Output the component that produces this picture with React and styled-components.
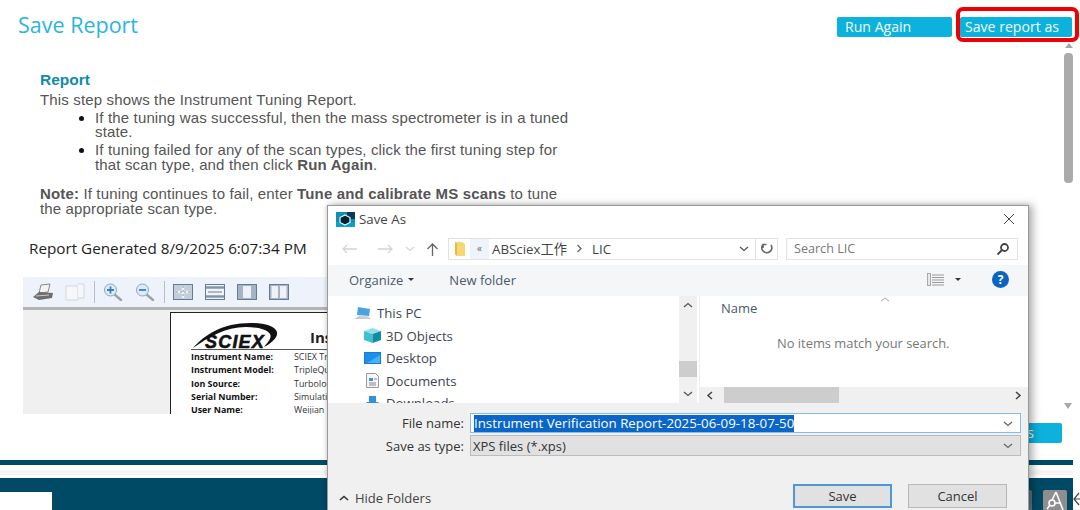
import React from 'react';
import styled, { createGlobalStyle } from 'styled-components';

const Global = createGlobalStyle`
  html, body { margin: 0; padding: 0; background: #fff; }
  * { box-sizing: border-box; }
`;

const Page = styled.div`
  position: relative;
  width: 1080px;
  height: 510px;
  overflow: hidden;
  background: #fff;
  font-family: 'Open Sans', sans-serif;
`;

const Header = styled.div`
  display: flex;
  align-items: flex-start;
  justify-content: space-between;
  height: 48px;
  padding: 7px 1px 0 18px;
`;

const Title = styled.h1`
  margin: 3px 0 0;
  font-size: 21.5px;
  font-weight: 400;
  color: #29b5e0;
`;

const HeaderButtons = styled.div`
  display: flex;
  align-items: center;
  gap: 4px;
`;

const Highlight = styled.div`
  padding: 6px 3px 1px 0;
  border: 4px solid #ee0000;
  border-radius: 7px;
`;

const ActionButton = styled.div`
  width: ${p => p.$w}px;
  height: 20px;
  margin-top: ${p => p.$mt || 0}px;
  padding-left: ${p => p.$pad}px;
  border-radius: 2px;
  background: #0db2dc;
  color: #f2fbff;
  font-size: 14.1px;
  line-height: 20px;
`;

const Content = styled.div`
  display: flex;
  flex-direction: column;
  height: 412px;
  padding-left: 40px;
`;

const Heading = styled.h2`
  margin: 23px 0 0;
  font: bold 15.5px/18px 'Liberation Sans', sans-serif;
  color: #0f8aab;
`;

const Body = styled.div`
  width: 535px;
  margin-top: 4px;
  font: 15px/14.5px 'Liberation Sans', sans-serif;
  letter-spacing: 0.15px;
  color: #555;
`;

const Bullets = styled.ul`
  margin: 3.25px 0 0;
  padding-left: 55px;
  li { margin-bottom: 3.5px; }
  li::marker { color: #111; }
`;

const Note = styled.p`
  margin: 15px 0 0;
`;

const Generated = styled.div`
  margin: 22px 0 0 -11px;
  font-size: 15.25px;
  line-height: 20px;
  color: #222;
`;

const Viewer = styled.div`
  display: flex;
  flex-direction: column;
  width: 310px;
  height: 137px;
  margin: 19px 0 0 -17px;
  background: #f0f0f0;
`;

const ViewerBar = styled.div`
  display: flex;
  align-items: center;
  height: 33px;
  padding-left: 10px;
  background: #eef3fb;
  border-bottom: 3px solid #b4b4b4;
`;

const ToolIcon = styled.svg`
  flex: none;
  width: 20px;
  height: 18px;
  margin-right: ${p => p.$gap || 0}px;
`;

const ToolSep = styled.div`
  width: 1px;
  height: 22px;
  margin-right: 8px;
  margin-left: -3px;
  background: #b8bec6;
`;

const ViewerArea = styled.div`
  flex: 1;
  padding: 2px 0 0 147px;
  overflow: hidden;
`;

const Sheet = styled.div`
  height: 120px;
  padding: 9px 0 0 20px;
  background: #fff;
  border-top: 1px solid #222;
  border-left: 1px solid #222;
  overflow: hidden;
  white-space: nowrap;
`;

const LogoRow = styled.div`
  display: flex;
  align-items: center;
  width: 200px;
  height: 28px;
  border-bottom: 1px solid #555;
`;

const LogoBox = styled.div`
  position: relative;
  flex: none;
  width: 119px;
  height: 27px;
`;

const LogoSwoosh = styled.svg`
  position: absolute;
  left: 0;
  top: 0;
`;

const LogoText = styled.span`
  position: absolute;
  left: 14px;
  top: 12px;
  font: italic 700 18px/16px 'Liberation Sans', sans-serif;
  letter-spacing: 1.2px;
  color: #111;
  -webkit-text-stroke: 0.6px #111;
`;

const SheetTitle = styled.span`
  margin-top: 3px;
  font: bold 15px/20px 'Open Sans', sans-serif;
  color: #222;
`;

const InfoGrid = styled.div`
  display: grid;
  grid-template-columns: 103px 1fr;
  font-size: 8.9px;
  line-height: 13.2px;
  color: #333;
  b { color: #111; font-weight: 700; }
`;

const Footer = styled.div`
  display: flex;
  flex-direction: column;
`;

const BackButton = styled.div`
  position: absolute;
  left: 960px;
  top: 423px;
  width: 102px;
  height: 20px;
  padding-right: 28px;
  border-radius: 2px;
  background: #0db2dc;
  color: #f2fbff;
  font-size: 14px;
  line-height: 20px;
  text-align: right;
`;

const FooterScroll = styled.div`
  position: absolute;
  left: 1064px;
  top: 403px;
  width: 0;
  height: 0;
  border-left: 4px solid transparent;
  border-right: 4px solid transparent;
  border-top: 6px solid #a8a8a8;
`;

const TopLine = styled.div`
  width: 1073px;
  height: 5px;
  background: #004a66;
`;

const PaleLine = styled.div`
  width: 1073px;
  height: 5px;
  margin-top: 5px;
  background: #f5f5f5;
`;

const FooterBar = styled.div`
  display: flex;
  align-items: flex-end;
  justify-content: space-between;
  height: 32px;
  margin-top: 3px;
`;

const FooterDark = styled.div`
  display: flex;
  align-items: flex-end;
  justify-content: space-between;
  width: 1073px;
  height: 32px;
  padding-right: 6px;
  background: #004a66;
`;

const FooterWhite = styled.div`
  width: 52px;
  height: 18px;
  background: #fff;
`;

const FooterTools = styled.div`
  display: flex;
  align-items: flex-end;
  gap: 11px;
`;

const FooterTool = styled.div`
  display: flex;
  align-items: center;
  justify-content: center;
  width: 24px;
  height: 20px;
  border-radius: 2px 2px 0 0;
  background: ${p => (p.$dim ? '#5f7480' : '#8e8e8e')};
`;

const Scroll = styled.div`
  position: absolute;
  left: 1064px;
  top: 43px;
  display: flex;
  flex-direction: column;
  align-items: center;
  width: 9px;
`;

const ScrollUp = styled.div`
  width: 0;
  height: 0;
  border-left: 4px solid transparent;
  border-right: 4px solid transparent;
  border-bottom: 5px solid #a8a8a8;
`;

const ScrollThumb = styled.div`
  width: 9px;
  height: 130px;
  margin-top: 5px;
  border-radius: 4px;
  background: #ababab;
`;

const Dialog = styled.div`
  position: absolute;
  left: 327px;
  top: 205px;
  display: flex;
  flex-direction: column;
  width: 702px;
  height: 305px;
  background: #fff;
  border: 1px solid #9a9a9a;
  border-bottom: none;
  box-shadow: 4px 0 8px rgba(0, 0, 0, 0.3), -1px 0 4px rgba(0, 0, 0, 0.12);
  font-family: 'Open Sans', sans-serif;
  color: #333;
`;

const DialogTitle = styled.div`
  display: flex;
  align-items: center;
  gap: 4px;
  height: 26px;
  padding: 0 13px 0 8px;
  font-size: 13.3px;
  color: #444;
`;

const DialogName = styled.span`
  flex: 1;
`;

const AddressRow = styled.div`
  display: flex;
  align-items: center;
  height: 33px;
  padding: 1px 9px 1px 0;
`;

const NavIcons = styled.div`
  display: flex;
  align-items: center;
  width: 120px;
  flex: none;
  padding-left: 13px;
`;

const AddressBox = styled.div`
  display: flex;
  align-items: center;
  width: 330px;
  height: 22px;
  border: 1px solid #e2e2e2;
  font-size: 13.3px;
  color: #444;
`;

const FolderCell = styled.div`
  display: flex;
  align-items: center;
  justify-content: center;
  width: 21px;
`;

const CrumbBack = styled.div`
  width: 19px;
  height: 20px;
  background: #eef4fb;
  color: #666;
  font-size: 10px;
  line-height: 18px;
  text-align: center;
`;

const Crumb = styled.span`
  margin-left: 3px;
  font-family: 'Open Sans', 'Noto Sans CJK SC', sans-serif;
`;

const CrumbArrow = styled.span`
  margin: 0 9px 0 9px;
  display: flex;
`;

const Spacer = styled.div`
  flex: 1;
`;

const ChevronCell = styled.span`
  display: flex;
  margin: ${p => p.$margin};
`;

const RefreshCell = styled.div`
  display: flex;
  align-items: center;
  justify-content: center;
  width: 22px;
  height: 20px;
  border-left: 1px solid #e2e2e2;
`;

const SearchBox = styled.div`
  display: flex;
  align-items: center;
  justify-content: space-between;
  width: 232px;
  height: 22px;
  margin-left: 8px;
  padding: 0 7px 0 7px;
  border: 1px solid #e2e2e2;
  font-size: 12.6px;
  color: #777;
`;

const CommandBar = styled.div`
  display: flex;
  align-items: center;
  height: 31px;
  padding: 0 19px 2px 21px;
  background: #f4f6f8;
  font-size: 13px;
  color: #4a5a70;
`;

const Caret = styled.span`
  width: 0;
  height: 0;
  margin-left: ${p => p.$gap || 5}px;
  border-left: 3px solid transparent;
  border-right: 3px solid transparent;
  border-top: 3px solid #334;
`;

const NewFolder = styled.span`
  margin-left: 35px;
`;

const HelpDot = styled.span`
  display: flex;
  align-items: center;
  justify-content: center;
  width: 17px;
  height: 17px;
  margin-left: 31px;
  border-radius: 50%;
  background: #0a64c0;
  color: #fff;
  font-size: 12px;
  font-weight: 700;
`;

const Panes = styled.div`
  display: flex;
  height: 107px;
`;

const NavPane = styled.div`
  display: flex;
  width: 371px;
  flex: none;
`;

const NavList = styled.div`
  flex: 1;
  padding: 6px 0 0 26px;
  overflow: hidden;
`;

const NavItem = styled.div`
  display: flex;
  align-items: center;
  gap: 5px;
  height: 22.5px;
  margin-left: ${p => (p.$top ? 0 : 10)}px;
  font-size: 13.2px;
  color: #3c4650;
`;

const NavScroll = styled.div`
  display: flex;
  flex-direction: column;
  justify-content: space-between;
  align-items: center;
  width: 18px;
  margin-right: 2px;
  padding: 5px 0;
  background: #f0f0f0;
`;

const NavThumb = styled.div`
  width: 18px;
  height: 16px;
  margin-top: 38px;
  background: #cdcdcd;
`;

const FilePane = styled.div`
  display: flex;
  flex-direction: column;
  flex: 1;
  position: relative;
  border-left: 1px solid #eee;
`;

const SortMark = styled.svg`
  position: absolute;
  left: 179px;
  top: 0;
`;

const NameHead = styled.div`
  padding: 3px 0 0 21px;
  font-size: 13px;
  color: #4a5a70;
`;

const EmptyNote = styled.div`
  margin: 17px 0 0 77px;
  font-size: 12.9px;
  color: #777;
`;

const HScroll = styled.div`
  display: flex;
  align-items: center;
  height: 16px;
  margin-top: auto;
  padding: 0 6px;
  background: #f0f0f0;
`;

const HThumb = styled.div`
  width: 115px;
  height: 16px;
  margin-left: 10px;
  background: #cdcdcd;
`;

const Lower = styled.div`
  flex: 1;
  background: #f0f0f0;
  padding-top: 10px;
`;

const FormRow = styled.div`
  display: flex;
  align-items: center;
  margin-bottom: ${p => p.$gap || 0}px;
  padding-right: 7px;
`;

const FormLabel = styled.label`
  width: 142px;
  padding-right: 6px;
  font-size: 13px;
  text-align: right;
  color: #333;
`;

const FileInput = styled.div`
  display: flex;
  align-items: center;
  justify-content: space-between;
  flex: 1;
  height: 20px;
  padding: 0 7px 0 3px;
  border: 1px solid #86bde8;
  background: #fff;
  font-size: 13.3px;
`;

const Selected = styled.span`
  padding: 0 0 1px;
  background: #0a66c8;
  color: #fff;
  line-height: 16px;
`;

const TypeSelect = styled.div`
  display: flex;
  align-items: center;
  justify-content: space-between;
  flex: 1;
  height: 21px;
  padding: 0 7px 0 2px;
  border: 1px solid #bcbcbc;
  background: #e1e1e1;
  font-size: 13px;
  color: #333;
`;

const BottomRow = styled.div`
  display: flex;
  align-items: center;
  margin-top: 28px;
  padding: 0 21px 0 11px;
`;

const HideFolders = styled.div`
  display: flex;
  align-items: center;
  gap: 6px;
  flex: 1;
  padding-top: 4px;
  font-size: 13px;
  color: #444;
`;

const DialogButton = styled.div`
  width: 99px;
  height: 24px;
  margin-left: 16px;
  border: ${p => (p.$primary ? '2px solid #4a9ad8' : '1px solid #b8b8b8')};
  background: #e1e1e1;
  font-size: 13px;
  line-height: ${p => (p.$primary ? 20 : 22)}px;
  text-align: center;
  color: #333;
`;

const Chevron = ({ d = 'M1 3l4 3.5L9 3', color = '#666' }) => (
  <svg width="10" height="9" viewBox="0 0 10 9" fill="none" stroke={color} strokeWidth="1.3">
    <path d={d} />
  </svg>
);

const Zoom = ({ minus }) => (
  <ToolIcon viewBox="0 0 20 18" $gap={12}>
    <path d="M11 11l7 6" stroke="#9aa3ad" strokeWidth="2.4" strokeLinecap="round" />
    <circle cx="7.500" cy="7" r="6" fill="#dcebf8" stroke="#8fa6bb" />
    <path d={minus ? 'M4 7h7' : 'M4 7h7M7.500 3.500v7'} stroke="#3a7fc4" strokeWidth="1.8" />
  </ToolIcon>
);

const Report = () => (
  <Viewer>
    <ViewerBar>
      <ToolIcon viewBox="0 0 20 18" $gap={12}>
        <path d="M8 2l9-1-2 8-9 1z" fill="#f4f4f4" stroke="#888" />
        <path d="M0 14l6-5 14 1-1 5-13 2z" fill="#6d6d6d" />
        <path d="M3 13l13-1" stroke="#ccc" />
      </ToolIcon>
      <ToolIcon viewBox="0 0 20 18" $gap={12}>
        <path d="M1 3h12v14H1z" fill="#f5f7fa" stroke="#d2d6da" />
        <path d="M13 1h6v14h-6" fill="#f5f7fa" stroke="#d2d6da" />
      </ToolIcon>
      <ToolSep />
      <Zoom />
      <Zoom minus />
      <ToolSep />
      <ToolIcon viewBox="0 0 20 18" $gap={12}>
        <rect x="0.500" y="1.500" width="19" height="15" fill="#c4cedb" stroke="#667b96" />
        <path d="M10 3v12M3 9h14" stroke="#f0f4f9" strokeWidth="2.4" />
        <path d="M10 3v12M3 9h14" stroke="#667b96" strokeWidth="0.8" strokeDasharray="2 2" />
      </ToolIcon>
      <ToolIcon viewBox="0 0 20 18" $gap={12}>
        <rect x="0.500" y="1.500" width="19" height="15" fill="#f0f3f7" stroke="#667b96" />
        <path d="M1 4.500h18M1 13.500h18" stroke="#8496ab" strokeWidth="2.4" />
        <path d="M3 9h14" stroke="#667b96" />
      </ToolIcon>
      <ToolIcon viewBox="0 0 20 18" $gap={12}>
        <rect x="0.500" y="1.500" width="19" height="15" fill="#a5b3c4" stroke="#667b96" />
        <rect x="6" y="3" width="8" height="12" fill="#eef1f5" />
      </ToolIcon>
      <ToolIcon viewBox="0 0 20 18">
        <rect x="0.500" y="1.500" width="19" height="15" fill="#a5b3c4" stroke="#667b96" />
        <rect x="2.500" y="3" width="6.500" height="12" fill="#eef1f5" />
        <rect x="11" y="3" width="6.500" height="12" fill="#eef1f5" />
      </ToolIcon>
    </ViewerBar>
    <ViewerArea>
      <Sheet>
        <LogoRow>
          <LogoBox>
            <LogoSwoosh width="90" height="27" viewBox="0 0 90 27">
              <path d="M2 26C14 13 30 1 60 1c13 0 24 3 26 9 1 6-6 11-13 15 4-5 8-9 6-13-3-5-13-7-24-7C34 5 18 15 2 26z" fill="#111" />
            </LogoSwoosh>
            <LogoText>SCIEX</LogoText>
          </LogoBox>
          <SheetTitle>Instrument</SheetTitle>
        </LogoRow>
        <InfoGrid>
          <b>Instrument Name:</b><span>SCIEX Triple</span>
          <b>Instrument Model:</b><span>TripleQuad</span>
          <b>Ion Source:</b><span>TurboIon</span>
          <b>Serial Number:</b><span>Simulation</span>
          <b>User Name:</b><span>Weijian</span>
        </InfoGrid>
      </Sheet>
    </ViewerArea>
  </Viewer>
);

const SaveDialog = () => (
  <Dialog>
    <DialogTitle>
      <svg width="19" height="15" viewBox="0 0 19 15">
        <rect width="19" height="15" fill="#0b8fb5" />
        <rect x="11" y="0" width="8" height="7" fill="#0a3a50" />
        <rect x="0" y="10" width="19" height="5" fill="#0aa0c8" />
        <path d="M9 3l5 2.500v5L9 13l-5-2.500v-5z" fill="#06202c" stroke="#e8f6fb" strokeWidth="1.2" />
      </svg>
      <DialogName>Save As</DialogName>
      <svg width="12" height="12" viewBox="0 0 12 12" stroke="#444" fill="none">
        <path d="M1 1l10 10M11 1L1 11" />
      </svg>
    </DialogTitle>
    <AddressRow>
      <NavIcons>
        <svg width="17" height="12" viewBox="0 0 17 12" fill="none" stroke="#d4d4d4" strokeWidth="1.3">
          <path d="M16 6H2M6 2L2 6l4 4" />
        </svg>
        <svg style={{ marginLeft: 19 }} width="17" height="12" viewBox="0 0 17 12" fill="none" stroke="#d4d4d4" strokeWidth="1.3">
          <path d="M1 6h14M11 2l4 4-4 4" />
        </svg>
        <ChevronCell $margin="0 11px 0 11px"><Chevron color="#d4d4d4" /></ChevronCell>
        <svg width="13" height="14" viewBox="0 0 13 14" fill="none" stroke="#666" strokeWidth="1.3">
          <path d="M6.500 14V2M1.500 7l5-5 5 5" />
        </svg>
      </NavIcons>
      <AddressBox>
        <FolderCell>
          <svg width="12" height="14" viewBox="0 0 12 14">
            <path d="M1 0h7l3 2v12H3L1 12z" fill="#f7d774" />
            <path d="M1 0l2 2v12l-2-2z" fill="#e8b93f" />
          </svg>
        </FolderCell>
        <CrumbBack>«</CrumbBack>
        <Crumb>ABSciex工作</Crumb>
        <CrumbArrow>
          <svg width="7" height="9" viewBox="0 0 7 9" fill="none" stroke="#666" strokeWidth="1.3">
            <path d="M1.500 1l3.500 3.500L1.500 8" />
          </svg>
        </CrumbArrow>
        <span>LIC</span>
        <Spacer />
        <ChevronCell $margin="0 6px 0 0"><Chevron color="#555" /></ChevronCell>
        <RefreshCell>
          <svg width="14" height="14" viewBox="0 0 14 14" fill="none" stroke="#666" strokeWidth="1.7">
            <path d="M3 2.500A5 5 0 1 0 11 3M3 6V2.500H6.500" />
          </svg>
        </RefreshCell>
      </AddressBox>
      <SearchBox>
        Search LIC
        <svg width="14" height="14" viewBox="0 0 14 14" fill="none" stroke="#444" strokeWidth="1.8">
          <circle cx="8.500" cy="5.500" r="3.500" />
          <path d="M6 8l-4.500 4.500" />
        </svg>
      </SearchBox>
    </AddressRow>
    <CommandBar>
      Organize<Caret />
      <NewFolder>New folder</NewFolder>
      <Spacer />
      <svg width="17" height="13" viewBox="0 0 17 13" fill="none">
        <rect x="0.500" y="0.500" width="3" height="12" fill="#e8e8e8" stroke="#aaa" />
        <path d="M5 2h12M5 4.500h12M5 7h12M5 9.500h12M5 12h12" stroke="#999" />
      </svg>
      <Caret $gap={11} />
      <HelpDot>?</HelpDot>
    </CommandBar>
    <Panes>
      <NavPane>
        <NavList>
          <NavItem $top>
            <svg width="18" height="14" viewBox="0 0 18 14">
              <path d="M4 1l12 2-1 7-12-1z" fill="#4aa3e0" />
              <path d="M0 13l5-3 9 .5 3 2.500z" fill="#c8ccd0" />
            </svg>
            This PC
          </NavItem>
          <NavItem>
            <svg width="17" height="15" viewBox="0 0 17 15">
              <path d="M8.500 0L17 3 8.500 6 0 3z" fill="#8fe0ea" />
              <path d="M0 3l8.500 3v9L0 12z" fill="#3fc0d0" />
              <path d="M17 3L8.500 6v9l8.500-3z" fill="#128ca4" />
            </svg>
            3D Objects
          </NavItem>
          <NavItem>
            <svg width="17" height="12" viewBox="0 0 17 12">
              <rect width="17" height="12" fill="#1d8fe8" stroke="#0f6fc0" />
              <path d="M3 11l13-8v8z" fill="#4ab0f5" />
            </svg>
            Desktop
          </NavItem>
          <NavItem>
            <svg width="17" height="15" viewBox="0 0 13 15" preserveAspectRatio="xMidYMid meet">
              <path d="M.5.500h9l3 3v11H.500z" fill="#f4f6f8" stroke="#999" />
              <path d="M3 5h4v3H3z" fill="#4a90d8" />
              <path d="M3 10h7M3 12h7M8 6h3" stroke="#888" />
            </svg>
            Documents
          </NavItem>
          <NavItem>
            <svg width="17" height="15" viewBox="0 0 17 15">
              <path d="M5 0h7v6h3l-6.500 7L2 6h3z" fill="#2f8fe0" />
            </svg>
            Downloads
          </NavItem>
        </NavList>
        <NavScroll>
          <Chevron d="M1 6l4-3.500L9 6" color="#555" />
          <NavThumb />
          <Chevron color="#555" />
        </NavScroll>
      </NavPane>
      <FilePane>
        <SortMark width="12" height="7" viewBox="0 0 12 7" fill="none" stroke="#aaa">
          <path d="M2 5l4-3 4 3" />
        </SortMark>
        <NameHead>Name</NameHead>
        <EmptyNote>No items match your search.</EmptyNote>
        <HScroll>
          <svg width="8" height="9" viewBox="0 0 8 9" fill="none" stroke="#444" strokeWidth="1.5"><path d="M6 1L2 4.500 6 8" /></svg>
          <HThumb />
          <Spacer />
          <svg width="8" height="9" viewBox="0 0 8 9" fill="none" stroke="#444" strokeWidth="1.5"><path d="M2 1l4 3.500L2 8" /></svg>
        </HScroll>
      </FilePane>
    </Panes>
    <Lower>
      <FormRow $gap={2}>
        <FormLabel htmlFor="file-name">File name:</FormLabel>
        <FileInput id="file-name">
          <Selected>Instrument Verification Report-2025-06-09-18-07-50</Selected>
          <Chevron color="#666" />
        </FileInput>
      </FormRow>
      <FormRow>
        <FormLabel htmlFor="file-type">Save as type:</FormLabel>
        <TypeSelect id="file-type">
          XPS files (*.xps)
          <Chevron color="#666" />
        </TypeSelect>
      </FormRow>
      <BottomRow>
        <HideFolders>
          <svg width="10" height="8" viewBox="0 0 10 8" fill="none" stroke="#333" strokeWidth="1.6">
            <path d="M1 6l4-3.500L9 6" />
          </svg>
          Hide Folders
        </HideFolders>
        <DialogButton $primary>Save</DialogButton>
        <DialogButton>Cancel</DialogButton>
      </BottomRow>
    </Lower>
  </Dialog>
);

export default function App() {
  return (
    <Page>
      <Global />
      <Header>
        <Title>Save Report</Title>
        <HeaderButtons>
          <ActionButton $w={115} $mt={5} $pad={8}>Run Again</ActionButton>
          <Highlight>
            <ActionButton $w={112} $pad={5}>Save report as</ActionButton>
          </Highlight>
        </HeaderButtons>
      </Header>
      <Content>
        <Heading>Report</Heading>
        <Body>
          This step shows the Instrument Tuning Report.
          <Bullets>
            <li>If the tuning was successful, then the mass spectrometer is in a tuned state.</li>
            <li>If tuning failed for any of the scan types, click the first tuning step for that scan type, and then click <b>Run Again</b>.</li>
          </Bullets>
          <Note>
            <b>Note:</b> If tuning continues to fail, enter <b>Tune and calibrate MS scans</b> to tune the appropriate scan type.
          </Note>
        </Body>
        <Generated>Report Generated 8/9/2025 6:07:34 PM</Generated>
        <Report />
      </Content>
      <Footer>
        <TopLine />
        <PaleLine />
        <FooterBar>
          <FooterDark>
            <FooterWhite />
            <FooterTools>
              <FooterTool $dim />
              <FooterTool>
                <svg width="20" height="20" viewBox="0 0 20 20" fill="none" stroke="#fff" strokeWidth="1.6">
                  <path d="M11 2l7 18M11 2L7 10" />
                  <circle cx="7" cy="13" r="3" />
                  <path d="M5 15l-3 4M10 13h5" />
                </svg>
              </FooterTool>
            </FooterTools>
          </FooterDark>
          <svg width="7" height="14" viewBox="0 0 7 14" fill="none" stroke="#444" strokeWidth="1.2" style={{ marginBottom: 4 }}>
            <path d="M6 1L1 7l5 6M1 7h6" />
          </svg>
        </FooterBar>
      </Footer>
      <Scroll>
        <ScrollUp />
        <ScrollThumb />
      </Scroll>
      <FooterScroll />
      <BackButton>s</BackButton>
      <SaveDialog />
    </Page>
  );
}
